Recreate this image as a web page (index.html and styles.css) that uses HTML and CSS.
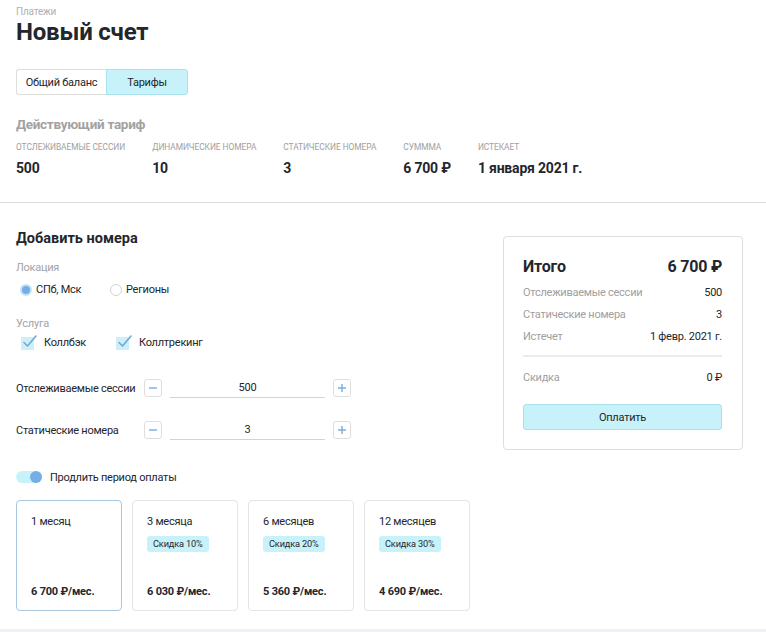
FILE: index.html
```html
<!DOCTYPE html>
<html lang="ru">
<head>
<meta charset="utf-8">
<title>Новый счет</title>
<link rel="stylesheet" href="styles.css">
</head>
<body>
<div class="page">
  <header class="head">
    <div class="crumb">Платежи</div>
    <h1 class="title">Новый счет</h1>
    <div class="tabs">
      <button class="tab tab-first">Общий баланс</button>
      <button class="tab tab-active">Тарифы</button>
    </div>
    <h2 class="sub">Действующий тариф</h2>
    <div class="stats">
      <div class="stat"><div class="stat-label">Отслеживаемые сессии</div><div class="stat-value">500</div></div>
      <div class="stat"><div class="stat-label">Динамические номера</div><div class="stat-value">10</div></div>
      <div class="stat"><div class="stat-label">Статические номера</div><div class="stat-value">3</div></div>
      <div class="stat"><div class="stat-label">Суммма</div><div class="stat-value">6 700 ₽</div></div>
      <div class="stat"><div class="stat-label">Истекает</div><div class="stat-value">1 января 2021 г.</div></div>
    </div>
  </header>

  <section class="main">
    <div class="form">
      <h3 class="section-title">Добавить номера</h3>
      <div class="field-label">Локация</div>
      <div class="options">
        <label class="opt opt-radio1"><span class="radio radio-on"></span>СПб, Мск</label>
        <label class="opt"><span class="radio"></span>Регионы</label>
      </div>
      <div class="field-label field-label-gap">Услуга</div>
      <div class="options options-check">
        <label class="opt opt-check1"><span class="check"><svg viewBox="0 0 16 16" width="16" height="16"><path d="M3 8.5 L6.5 12 L15 2" fill="none" stroke="#6fa8dc" stroke-width="1.6" stroke-linecap="round" stroke-linejoin="round"/></svg></span>Коллбэк</label>
        <label class="opt"><span class="check"><svg viewBox="0 0 16 16" width="16" height="16"><path d="M3 8.5 L6.5 12 L15 2" fill="none" stroke="#6fa8dc" stroke-width="1.6" stroke-linecap="round" stroke-linejoin="round"/></svg></span>Коллтрекинг</label>
      </div>

      <div class="stepper stepper-first">
        <span class="stepper-label">Отслеживаемые сессии</span>
        <button class="step-btn"><svg viewBox="0 0 10 10" width="10" height="10"><path d="M1 5H9" stroke="#7aaee0" stroke-width="1.4"/></svg></button>
        <span class="step-input">500</span>
        <button class="step-btn"><svg viewBox="0 0 10 10" width="10" height="10"><path d="M1 5H9M5 1V9" stroke="#7aaee0" stroke-width="1.4"/></svg></button>
      </div>
      <div class="stepper">
        <span class="stepper-label">Статические номера</span>
        <button class="step-btn"><svg viewBox="0 0 10 10" width="10" height="10"><path d="M1 5H9" stroke="#7aaee0" stroke-width="1.4"/></svg></button>
        <span class="step-input">3</span>
        <button class="step-btn"><svg viewBox="0 0 10 10" width="10" height="10"><path d="M1 5H9M5 1V9" stroke="#7aaee0" stroke-width="1.4"/></svg></button>
      </div>

      <div class="toggle-row">
        <span class="toggle"><span class="knob"></span></span>
        <span>Продлить период оплаты</span>
      </div>

      <div class="periods">
        <div class="period period-active">
          <div class="period-name">1 месяц</div>
          <div class="period-price">6 700 ₽/мес.</div>
        </div>
        <div class="period">
          <div class="period-name">3 месяца</div>
          <span class="badge">Скидка 10%</span>
          <div class="period-price">6 030 ₽/мес.</div>
        </div>
        <div class="period">
          <div class="period-name">6 месяцев</div>
          <span class="badge">Скидка 20%</span>
          <div class="period-price">5 360 ₽/мес.</div>
        </div>
        <div class="period">
          <div class="period-name">12 месяцев</div>
          <span class="badge">Скидка 30%</span>
          <div class="period-price">4 690 ₽/мес.</div>
        </div>
      </div>
    </div>

    <aside class="summary">
      <div class="sum-head"><span>Итого</span><span>6 700 ₽</span></div>
      <div class="sum-row"><span class="sum-key">Отслеживаемые сессии</span><span>500</span></div>
      <div class="sum-row"><span class="sum-key">Статические номера</span><span>3</span></div>
      <div class="sum-row"><span class="sum-key">Истечет</span><span>1 февр. 2021 г.</span></div>
      <div class="sum-line"></div>
      <div class="sum-row sum-discount"><span class="sum-key">Скидка</span><span>0 ₽</span></div>
      <button class="pay">Оплатить</button>
    </aside>
  </section>
</div>
</body>
</html>
```

FILE: styles.css
```css
* { box-sizing: border-box; }
html, body { margin: 0; padding: 0; }
body {
  background: #eef2f4;
  font-family: Roboto, "Noto Sans", "Liberation Sans", sans-serif;
  color: #23262b;
  font-size: 11px;
  letter-spacing: -0.25px;
}
.page { background: #fff; height: 629px; }

.head { padding: 6px 16px 0; border-bottom: 1px solid #dcdcdc; height: 203px; }
.crumb { font-size: 10px; line-height: 12px; color: #b0b0b0; letter-spacing: -0.2px; }
.title { margin: 0; font-size: 24px; line-height: 28px; font-weight: 700; color: #23262b; letter-spacing: -0.2px; }

.tabs { display: flex; margin-top: 23px; height: 26px; width: 172px; }
.tab {
  font: inherit; letter-spacing: inherit; color: #23262b; background: #fff;
  border: 1px solid #dedede; padding: 0; height: 26px; cursor: pointer;
}
.tab-first { width: 90px; border-radius: 3px 0 0 3px; border-right: none; }
.tab-active { width: 82px; background: #c8f2fa; border-color: #a9e1ec; border-radius: 0 3px 3px 0; }

.sub { margin: 19px 0 0; font-size: 13.5px; line-height: 20px; font-weight: 700; color: #a2a2a2; letter-spacing: -0.3px; }
.stats { display: flex; gap: 27px; margin-top: 7px; }
.stat-label { font-size: 8.4px; line-height: 12px; text-transform: uppercase; color: #a0a0a0; letter-spacing: -0.05px; }
.stat-value { margin-top: 6px; font-size: 14px; line-height: 18px; font-weight: 700; color: #23262b; letter-spacing: -0.2px; }

.main { display: flex; padding: 27px 23px 0 16px; }
.form { flex: 1; }
.section-title { margin: 0; font-size: 14.5px; line-height: 18px; font-weight: 700; letter-spacing: 0; }
.field-label { margin-top: 12px; line-height: 16px; color: #a3a3a3; }
.field-label-gap { margin-top: 18px; }
.options { display: flex; margin-top: 6px; height: 16px; align-items: center; }
.options-check { margin-top: 3px; }
.opt { display: flex; align-items: center; line-height: 16px; }
.opt-radio1 { margin-left: 4px; width: 90px; }
.radio {
  width: 12px; height: 12px; border-radius: 50%; border: 1px solid #d3d3d3;
  margin-right: 4px; background: #fff;
}
.radio-on { border: 2px solid #c3e2f7; background: #74aee6; }
.opt-check1 { margin-left: 5px; width: 95px; }
.check {
  position: relative; width: 13px; height: 13px; background: #cdeff7;
  margin-right: 10px;
}
.check svg { position: absolute; left: 0; top: -3px; }

.stepper { display: flex; align-items: center; margin-top: 24px; height: 18px; }
.stepper-first { margin-top: 28px; }
.stepper-label { width: 128px; white-space: nowrap; }
.step-btn {
  width: 18px; height: 18px; padding: 0; border: 1px solid #dedede; border-radius: 3px;
  background: #fff; display: flex; align-items: center; justify-content: center;
}
.step-input {
  width: 155px; margin: 0 8px; text-align: center; line-height: 16px;
  border-bottom: 1px solid #d3d3d3; height: 19px; padding-top: 1px;
}

.toggle-row { display: flex; align-items: center; margin-top: 31px; height: 14px; }
.toggle {
  position: relative; width: 26px; height: 12px; border-radius: 6px; background: #c8f2fa;
  margin-right: 8px;
}
.knob {
  position: absolute; right: 0; top: 0; width: 12px; height: 12px; border-radius: 50%;
  background: #74aee6;
}

.periods { display: flex; gap: 10px; margin-top: 16px; }
.period {
  width: 106px; height: 111px; border: 1px solid #e4e4e4; border-radius: 4px;
  padding: 13px 10px 10px 14px; display: flex; flex-direction: column; align-items: flex-start;
}
.period-active { border-color: #a7c6df; }
.period-name { line-height: 16px; }
.badge {
  margin-top: 6px; background: #c8f2fa; border-radius: 3px; font-size: 9.2px; line-height: 16px;
  padding: 0 6px; letter-spacing: -0.15px;
}
.period-price { margin-top: auto; line-height: 16px; font-weight: 700; letter-spacing: -0.2px; }

.summary {
  width: 240px; margin-left: 33px; margin-top: 6px; align-self: flex-start;
  border: 1px solid #dedede; border-radius: 4px; padding: 20px 20px 19px 19px;
}
.sum-head { display: flex; justify-content: space-between; font-size: 16px; line-height: 20px; font-weight: 700; letter-spacing: -0.2px; }
.sum-row { display: flex; justify-content: space-between; line-height: 16px; margin-top: 6px; }
.sum-head + .sum-row { margin-top: 8px; }
.sum-key { color: #a0a0a0; }
.sum-line { height: 2px; background: #ebebeb; margin-top: 10px; }
.sum-discount { margin-top: 13px; }
.pay {
  display: block; width: 100%; height: 26px; margin-top: 18px; padding: 0;
  font: inherit; letter-spacing: inherit; color: #23262b;
  background: #c8f2fa; border: 1px solid #a9e1ec; border-radius: 3px;
}
```
